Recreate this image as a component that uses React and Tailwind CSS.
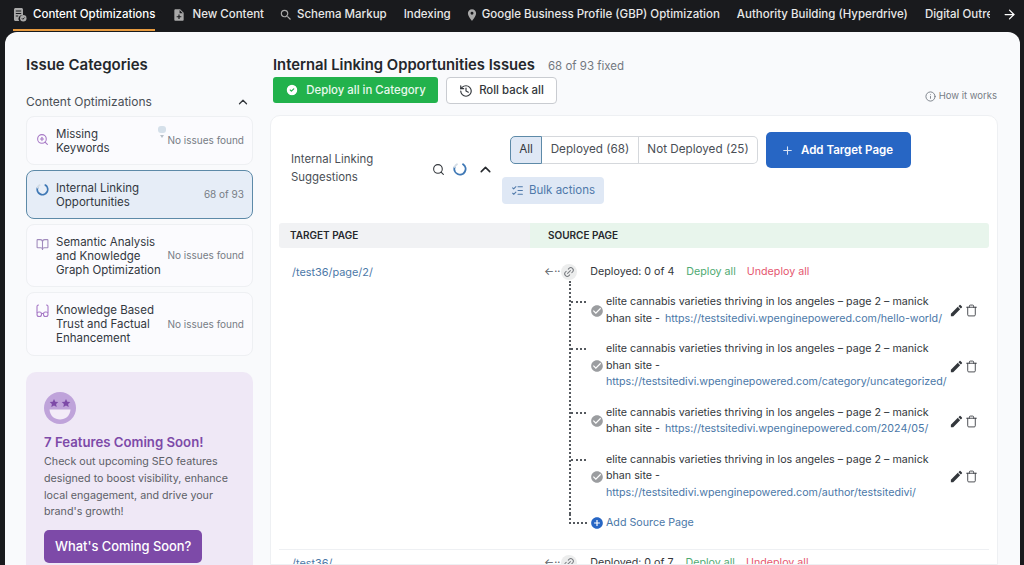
import React from 'react';
import { ArrowRight, BookOpen, ChevronUp, CircleCheck, History, Info, Link2, ListChecks, Plus, Search, Trash, ZoomIn } from 'lucide-react';
import { MdAddCircle, MdCheckCircle, MdEdit, MdLocationOn, MdNoteAdd, MdSearch } from 'react-icons/md';

function DocCheck({ size, className }) {
  return (
    <svg width={size} height={size} viewBox="0 0 14 14" className={className} fill="currentColor">
      <path d="M1 1.500C1 .7 1.700 0 2.500 0h6C9.300 0 10 .7 10 1.500V7a3.800 3.800 0 0 0-3.800 6H2.500C1.700 13 1 12.300 1 11.500z" />
      <path d="M2.800 3h5.400M2.800 5.500h5.400M2.800 8h2.400" stroke="#191a1d" strokeWidth="1" />
      <circle cx="10.300" cy="10.300" r="3.200" />
      <path d="M8.900 10.300l1 1 1.700-1.800" fill="none" stroke="#191a1d" strokeWidth="1" />
    </svg>
  );
}

const NAV_ITEMS = [
  { label: 'Content Optimizations', Icon: DocCheck, box: 'w-[14px]', active: true },
  { label: 'New Content', Icon: MdNoteAdd, box: 'w-[14px]' },
  { label: 'Schema Markup', Icon: MdSearch, box: 'w-[10px]' },
  { label: 'Indexing' },
  { label: 'Google Business Profile (GBP) Optimization', Icon: MdLocationOn, box: 'w-[8px]' },
  { label: 'Authority Building (Hyperdrive)' },
];

const SOURCES = [
  { url: 'https://testsitedivi.wpenginepowered.com/hello-world/', inline: true },
  { url: 'https://testsitedivi.wpenginepowered.com/category/uncategorized/' },
  { url: 'https://testsitedivi.wpenginepowered.com/2024/05/', inline: true },
  { url: 'https://testsitedivi.wpenginepowered.com/author/testsitedivi/' },
];

function Spinner({ size = 16 }) {
  return (
    <svg width={size} height={size} viewBox="0 0 16 16" fill="none" strokeWidth="2.2" strokeLinecap="round">
      <path d="M11.5 2.6A6.4 6.4 0 1 1 2 5.6" stroke="#3f78b5" />
      <path d="M2 5.6A6.4 6.4 0 0 1 4.500 2.600" stroke="#d3dce6" />
    </svg>
  );
}

function StarFace() {
  return (
    <svg width="32" height="32" viewBox="0 0 32 32">
      <circle cx="16" cy="16" r="16" fill="#bfa3da" />
      <path d="M5.5 17.5h21C26 24 21.500 27.500 16 27.500S6 24 5.500 17.500z" fill="#f3ecf8" />
      <path d="M10 7l1.300 2.800 3 .3-2.200 2 .6 3-2.700-1.500-2.700 1.500.6-3-2.200-2 3-.3z" fill="#7d4aa8" />
      <path d="M22 7l1.300 2.800 3 .3-2.200 2 .6 3-2.700-1.500-2.700 1.500.6-3-2.200-2 3-.3z" fill="#7d4aa8" />
    </svg>
  );
}

function OpenGlasses() {
  return (
    <svg width="13" height="14" viewBox="0 0 13 14" fill="none" stroke="#a779c6" strokeWidth="1.1" strokeLinecap="round">
      <path d="M1 8.500V2.500C1 1.500 1.500 1 2.500 1" />
      <path d="M12 8.500V2.500C12 1.500 11.500 1 10.500 1" />
      <rect x="1" y="8" width="4.500" height="4.500" rx="2" />
      <rect x="7.500" y="8" width="4.500" height="4.500" rx="2" />
      <path d="M5.500 9.500h2" />
    </svg>
  );
}

function Category({ icon, lines, status, active, height, children }) {
  return (
    <div className={`relative flex items-center justify-between rounded-lg border pl-[9px] pr-2 ${height} ${active ? 'border-[#5d8aa8] bg-[#e6edf7]' : 'border-[#eef0f3] bg-[#fbfbfe]'}`}>
      <div className="flex items-center gap-[7px]">
        <div className="flex w-[13px] justify-center self-start pt-[1px]">{icon}</div>
        <div className="whitespace-nowrap text-[11.500px] leading-[14px] text-[#33383f]">
          {lines.map(line => <div key={line}>{line}</div>)}
        </div>
      </div>
      <span className="whitespace-nowrap text-[10px] text-[#777d85]">{status}</span>
      {children}
    </div>
  );
}

function Source({ url, inline }) {
  return (
    <div className="flex items-center">
      <div className="mr-[3px] w-[16px] self-start pt-[7px]">
        <div className="w-[15px] border-t-2 border-dotted border-[#55595f]" />
      </div>
      <MdCheckCircle className="mr-[2px] shrink-0 text-[#9b9da0]" size={14} />
      <div className="w-[342px] text-[10.700px] leading-[16.500px] text-[#33373c]">
        elite cannabis varieties thriving in los angeles – page 2 – manick bhan site
        <span className="ml-[3px] mr-[5px]">-</span>
        {!inline && <br />}
        <span className="whitespace-nowrap text-[#4b78a8]">{url}</span>
      </div>
      <MdEdit className="ml-[1px] shrink-0 text-[#33373c]" size={15} />
      <Trash className="ml-[1px] shrink-0 text-[#33373c]" size={13} strokeWidth={1.6} />
    </div>
  );
}

function DeployLine({ count }) {
  return (
    <div className="flex h-[18px] items-center whitespace-nowrap text-[10.700px] text-[#33373c]">
      <span className="mr-[1px] text-[#55595f]">←··</span>
      <span className="flex h-[16px] w-[16px] items-center justify-center rounded-full bg-[#eceded]">
        <Link2 size={12} className="-rotate-45 text-[#777a7f]" />
      </span>
      <span className="ml-[13px]">Deployed: 0 of {count}</span>
      <span className="ml-[12px] text-[#4faa72]">Deploy all</span>
      <span className="ml-[11px] text-[#e5576f]">Undeploy all</span>
    </div>
  );
}

export default function App() {
  return (
    <div className="flex h-[565px] flex-col overflow-hidden bg-[#191a1d] font-['Inter',sans-serif]">
      <nav className="relative flex h-[32px] shrink-0 items-start gap-[17px] pl-[13px] text-[11.500px] font-medium text-[#e8e8e8]">
        {NAV_ITEMS.map(({ label, Icon, box, active }) => (
          <div key={label} className={`flex h-[31px] items-center gap-[6px] whitespace-nowrap border-b-2 pt-[1px] ${active ? 'border-[#e79a3f] text-white' : 'border-transparent'}`}>
            {Icon && (
              <span className={`flex justify-center ${box}`}>
                <Icon size={14} className="shrink-0 text-[#a9a9a9]" />
              </span>
            )}
            {label}
          </div>
        ))}
        <div className="flex h-[29px] w-[65px] items-center overflow-hidden whitespace-nowrap">Digital Outreach</div>
        <div className="absolute right-0 top-0 flex h-[28px] w-[30px] items-center justify-center">
          <ArrowRight size={15} className="text-white" />
        </div>
      </nav>

      <main className="ml-[5px] mr-[4px] flex min-h-0 flex-1 gap-[18px] rounded-t-[12px] bg-[#f9fafc] pl-[21px] pr-[22px] pt-[24px]">
        <aside className="w-[227px] shrink-0">
          <h2 className="text-[15px] font-semibold leading-[18px] text-[#24272b]">Issue Categories</h2>
          <div className="mt-[20px] flex items-center justify-between pr-[3px] text-[12px] leading-[16px] text-[#4a4f56]">
            Content Optimizations
            <ChevronUp size={14} strokeWidth={2.2} className="text-[#33373c]" />
          </div>
          <div className="mt-[6px] flex flex-col gap-[5px]">
            <Category height="h-[49px]" icon={<ZoomIn size={13} className="mt-[5px] text-[#a779c6]" />} lines={['Missing', 'Keywords']} status="No issues found">
              <svg className="absolute left-[130px] top-[9px]" width="10" height="14" viewBox="0 0 10 14">
                <rect x="1" y="0" width="8" height="7" rx="3" fill="#d5e0ea" />
                <path d="M3 9h4l-2 3z" fill="#b8c0c8" />
              </svg>
            </Category>
            <Category height="h-[49px]" active icon={<Spinner size={15} />} lines={['Internal Linking', 'Opportunities']} status="68 of 93" />
            <Category height="h-[63px]" icon={<BookOpen size={13} className="mt-[2px] text-[#a18bbd]" />} lines={['Semantic Analysis', 'and Knowledge', 'Graph Optimization']} status="No issues found" />
            <Category height="h-[64px]" icon={<OpenGlasses />} lines={['Knowledge Based', 'Trust and Factual', 'Enhancement']} status="No issues found" />
          </div>
          <div className="mt-[16px] rounded-[10px] bg-[#efe8f6] px-[18px] pb-[20px] pt-[20px]">
            <StarFace />
            <h3 className="mt-[9px] whitespace-nowrap text-[13.200px] font-semibold leading-[18px] text-[#7d4aa8]">7 Features Coming Soon!</h3>
            <p className="mt-[3px] text-[10.700px] leading-[16.800px] text-[#5d6067]">
              Check out upcoming SEO features designed to boost visibility, enhance local engagement, and drive your brand's growth!
            </p>
            <button className="mt-[9px] h-[33px] whitespace-nowrap rounded-[5px] bg-[#7d4aa8] px-[11px] text-[12.900px] font-medium text-white">What's Coming Soon?</button>
          </div>
        </aside>

        <section className="flex min-w-0 flex-1 flex-col">
          <div className="flex items-baseline gap-[13px] pl-[2px]">
            <h1 className="text-[14.800px] font-semibold leading-[18px] text-[#24272b]">Internal Linking Opportunities Issues</h1>
            <span className="text-[11.500px] text-[#73787f]">68 of 93 fixed</span>
          </div>
          <div className="mt-[2px] flex h-[38px] shrink-0 items-start justify-between pl-[2px]">
            <div className="flex gap-[8px]">
              <button className="flex h-[26px] w-[165px] items-center justify-center gap-[7px] rounded-[3px] bg-[#22b24c] text-[11.400px] font-medium text-[#e8f8ec]">
                <CircleCheck size={14} className="fill-white text-[#22b24c]" />
                Deploy all in Category
              </button>
              <button className="flex h-[27px] w-[111px] items-center justify-center gap-[6px] rounded-[4px] border border-[#c9ccd1] bg-white text-[11.400px] font-medium text-[#33373c]">
                <History size={14} />
                Roll back all
              </button>
            </div>
            <div className="mr-[1px] mt-[12px] flex items-center gap-[3px] text-[9.500px] text-[#777d85]">
              <Info size={11} />
              How it works
            </div>
          </div>

          <div className="-ml-[1px] flex min-h-0 flex-1 flex-col overflow-hidden rounded-t-[10px] border border-[#eef0f3] bg-white px-[8px]">
            <div className="flex h-[107px] shrink-0">
              <div className="mt-[34px] w-[153px] pl-[12px] text-[11.400px] leading-[18px] text-[#4a4f56]">
                Internal Linking<br />Suggestions
              </div>
              <div className="mt-[43px] flex h-[20px] items-center gap-[8px]">
                <Search size={13} strokeWidth={2} className="text-[#33373c]" />
                <Spinner size={14} />
                <ChevronUp size={17} strokeWidth={2.2} className="ml-[2px] text-[#26292d]" />
              </div>
              <div className="ml-[8px] flex flex-col">
                <div className="ml-[8px] mt-[16px] flex items-center gap-[8px]">
                  <div className="flex h-[28px] items-stretch text-[11.700px] text-[#4a4f56]">
                    <div className="flex w-[32px] items-center justify-center rounded-l-[5px] border border-[#5d8aa8] bg-[#dfe8f5] text-[#33373c]">All</div>
                    <div className="flex w-[97px] items-center justify-center border-y border-r border-[#d5d8dc]">Deployed (68)</div>
                    <div className="flex w-[119px] items-center justify-center rounded-r-[5px] border-y border-r border-[#d5d8dc]">Not Deployed (25)</div>
                  </div>
                  <button className="flex h-[36px] w-[145px] items-center justify-center gap-[7px] rounded-[5px] bg-[#2766c4] pr-[3px] text-[11.500px] font-semibold text-white">
                    <Plus size={13} className="text-[#d8e4f5]" />
                    Add Target Page
                  </button>
                </div>
                <button className="mt-[9px] flex h-[27px] w-[102px] items-center justify-center gap-[5px] rounded-[4px] bg-[#dfe8f5] text-[11.500px] text-[#4f79aa]">
                  <ListChecks size={13} />
                  Bulk actions
                </button>
              </div>
            </div>

            <div className="grid h-[25px] shrink-0 grid-cols-[251px_1fr] items-center rounded-[3px] text-[10px] font-semibold text-[#26292d]">
              <div className="flex h-full items-center rounded-l-[3px] bg-[#f1f2f4] pl-[11px]">TARGET PAGE</div>
              <div className="flex h-full items-center rounded-r-[3px] bg-[#e8f5ec] pl-[18px]">SOURCE PAGE</div>
            </div>

            <div className="grid shrink-0 grid-cols-[251px_1fr] border-b border-[#eef0f3] pb-[17px]">
              <div className="pl-[13px] pt-[15px] text-[10.900px] leading-[18px] text-[#4b78a8]">/test36/page/2/</div>
              <div className="pl-[14px] pt-[15px]">
                <DeployLine count={4} />
                <div className="ml-[25px] flex flex-col gap-[14px] border-l-2 border-dotted border-[#55595f] pb-[13px] pt-[13px]">
                  {SOURCES.map(s => <Source key={s.url} {...s} />)}
                </div>
                <div className="ml-[25px] flex h-[18px] items-center">
                  <div className="mr-[3px] h-[10px] w-[18px] self-start border-b-2 border-l-2 border-dotted border-[#55595f]" />
                  <div className="flex items-center gap-[2px] text-[10.700px] text-[#4b78a8]">
                    <MdAddCircle size={14} className="text-[#2766c4]" />
                    Add Source Page
                  </div>
                </div>
              </div>
            </div>

            <div className="grid shrink-0 grid-cols-[251px_1fr]">
              <div className="pl-[13px] pt-[4px] text-[10.900px] leading-[18px] text-[#4b78a8]">/test36/</div>
              <div className="pl-[14px] pt-[4px]">
                <DeployLine count={7} />
              </div>
            </div>
          </div>
        </section>
      </main>
    </div>
  );
}
